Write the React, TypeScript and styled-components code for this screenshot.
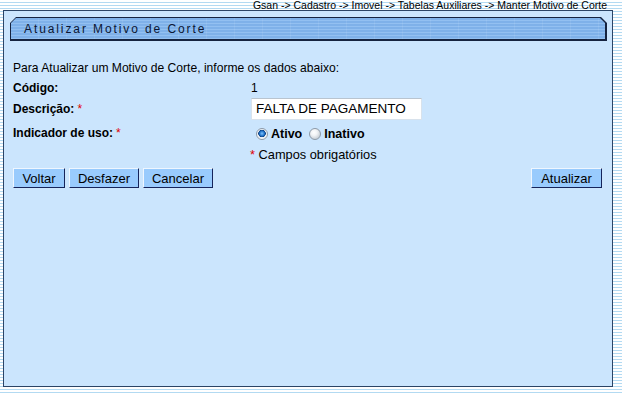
import { createGlobalStyle, styled } from 'styled-components';

const GlobalStyle = createGlobalStyle`
  html, body {
    margin: 0;
    padding: 0;
  }
  body {
    font-family: 'Liberation Sans', Arial, sans-serif;
    color: #000;
  }
`;

const Page = styled.div`
  width: 622px;
  height: 393px;
  box-sizing: border-box;
  overflow: hidden;
  background: repeating-linear-gradient(
    to bottom,
    #ffffff 0px,
    #ffffff 2px,
    #b3daf2 2px,
    #b3daf2 3px
  );
  display: flex;
  flex-direction: column;
`;

const Breadcrumb = styled.div`
  height: 10px;
  padding-right: 15px;
  text-align: right;
  font-size: 10.5px;
  line-height: 10px;
  color: #000;
  white-space: nowrap;
`;

const Panel = styled.div`
  margin-left: 3px;
  width: 610px;
  height: 377px;
  box-sizing: border-box;
  border: 1px solid #2b4466;
  background: #cbe5fd;
  padding: 6px 5px 0 6px;
  display: flex;
  flex-direction: column;
`;

const chamfer = `polygon(6px 0, calc(100% - 6px) 0, 100% 6px, 100% 100%, 0 100%, 0 6px)`;

const HeaderFrame = styled.div`
  height: 24px;
  box-sizing: border-box;
  padding: 1px 2px 2px 1px;
  background: #15233f;
  clip-path: ${chamfer};
  display: flex;
`;

const HeaderFill = styled.div`
  flex: 1;
  clip-path: polygon(5px 0, calc(100% - 5px) 0, 100% 5px, 100% 100%, 0 100%, 0 5px);
  background:
    repeating-linear-gradient(to right, transparent 0px, transparent 27px, rgba(255, 255, 255, 0.08) 27px, rgba(255, 255, 255, 0.08) 28px),
    repeating-linear-gradient(to bottom, #7fb1e9 0px, #7fb1e9 2px, #93c0f1 2px, #93c0f1 3px);
  display: flex;
  align-items: center;
  padding-left: 13px;
  font-size: 12px;
  letter-spacing: 1.9px;
  color: #0b1633;
`;

const Content = styled.div`
  padding: 20px 3px 0 3px;
  display: flex;
  flex-direction: column;
  font-size: 12px;
`;

const Intro = styled.div`
  height: 14px;
  line-height: 14px;
  margin-bottom: 3px;
  font-size: 12.1px;
`;

const Row = styled.div<{ $h: number }>`
  display: grid;
  grid-template-columns: 238px 1fr;
  align-items: center;
  height: ${p => p.$h}px;
`;

const Label = styled.div`
  font-weight: bold;
`;

const Req = styled.span<{ $gap?: number }>`
  color: #e00000;
  font-weight: normal;
  margin-left: ${p => p.$gap ?? 3}px;
`;

const Value = styled.div`
  display: flex;
  align-items: center;
`;

const TextBox = styled.div`
  width: 171px;
  height: 22px;
  box-sizing: border-box;
  background: #fff;
  border: 1px solid #d8e2ec;
  border-top-color: #b9c4cf;
  padding-left: 4px;
  font-size: 13.5px;
  line-height: 20px;
  color: #000;
`;

const RadioGroup = styled.div`
  display: flex;
  align-items: center;
  padding-left: 5px;
  padding-top: 3px;
`;

const RadioItem = styled.label`
  display: flex;
  align-items: center;
  gap: 3px;
  font-weight: bold;
  font-size: 12.5px;
  margin-right: 7px;
`;

const RadioDot = styled.span<{ $on?: boolean }>`
  width: 12px;
  height: 12px;
  box-sizing: border-box;
  border-radius: 50%;
  border: 1px solid #8d9aa8;
  background: ${p =>
    p.$on
      ? 'radial-gradient(circle at 50% 45%, #7fc4ff 0px, #1d6fc6 2.5px, #0d3f80 3.5px, #e8eef4 4px, #ffffff 6px)'
      : 'radial-gradient(circle at 40% 35%, #ffffff 0px, #f2f4f6 3px, #d0d6dc 6px)'};
`;

const Note = styled.div`
  margin-left: -1px;
  font-size: 12.8px;
`;

const ButtonBar = styled.div`
  display: flex;
  justify-content: space-between;
  align-items: center;
  margin-top: 3px;
  padding-right: 2px;
`;

const ButtonGroup = styled.div`
  display: flex;
  gap: 4px;
`;

const Button = styled.button<{ $w: number }>`
  width: ${p => p.$w}px;
  height: 20px;
  box-sizing: border-box;
  padding: 0;
  background: #99cbfd;
  border: 1px solid;
  border-color: #eef6ff #16245a #16245a #eef6ff;
  font-family: 'Liberation Sans', Arial, sans-serif;
  font-size: 13px;
  color: #000;
  cursor: pointer;
`;

export default function App() {
  return (
    <Page>
      <GlobalStyle />
      <Breadcrumb>Gsan -&gt; Cadastro -&gt; Imovel -&gt; Tabelas Auxiliares -&gt; Manter Motivo de Corte</Breadcrumb>
      <Panel>
        <HeaderFrame>
          <HeaderFill>Atualizar Motivo de Corte</HeaderFill>
        </HeaderFrame>
        <Content>
          <Intro>Para Atualizar um Motivo de Corte, informe os dados abaixo:</Intro>
          <Row $h={19}>
            <Label>Código:</Label>
            <Value>1</Value>
          </Row>
          <Row $h={24}>
            <Label>
              Descrição:<Req>*</Req>
            </Label>
            <Value>
              <TextBox>FALTA DE PAGAMENTO</TextBox>
            </Value>
          </Row>
          <Row $h={23}>
            <Label>
              Indicador de uso:<Req>*</Req>
            </Label>
            <RadioGroup>
              <RadioItem>
                <RadioDot $on />
                Ativo
              </RadioItem>
              <RadioItem>
                <RadioDot />
                Inativo
              </RadioItem>
            </RadioGroup>
          </Row>
          <Row $h={21}>
            <span />
            <Note>
              <Req $gap={0}>*</Req> Campos obrigatórios
            </Note>
          </Row>
          <ButtonBar>
            <ButtonGroup>
              <Button $w={52}>Voltar</Button>
              <Button $w={70}>Desfazer</Button>
              <Button $w={70}>Cancelar</Button>
            </ButtonGroup>
            <Button $w={71}>Atualizar</Button>
          </ButtonBar>
        </Content>
      </Panel>
    </Page>
  );
}
